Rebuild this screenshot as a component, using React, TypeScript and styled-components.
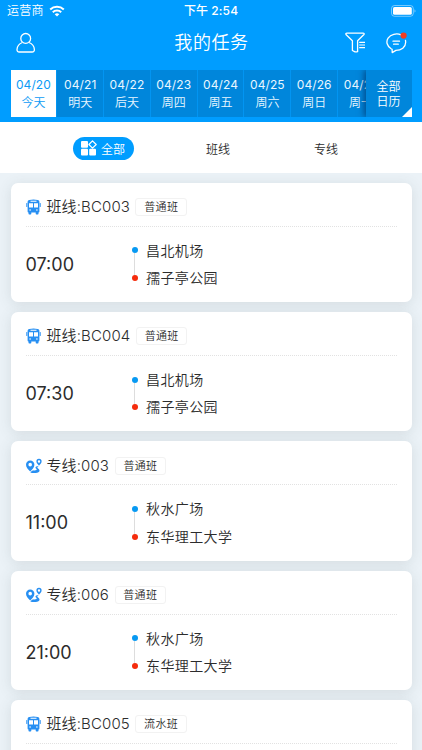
import React from "react";
import styled, { createGlobalStyle } from "styled-components";

const GlobalStyle = createGlobalStyle`
  * { box-sizing: border-box; }
  body {
    margin: 0;
    overflow: hidden;
    background: #e9eff3;
    font-family: Inter, "Noto Sans CJK SC", sans-serif;
    font-weight: 350;
    color: #2c2c2c;
  }
`;

const Screen = styled.div`
  width: 422px;
  height: 750px;
  overflow: hidden;
  background: #ebf2f7;
`;

const Header = styled.header`
  height: 121.5px;
  background: #009dff;
  color: #fff;
`;

const StatusBar = styled.div`
  display: grid;
  grid-template-columns: 1fr auto 1fr;
  align-items: center;
  height: 22px;
  padding: 0 5px 0 7px;
  font-size: 12px;
  line-height: 22px;
`;

const Carrier = styled.div`
  display: flex;
  align-items: center;
  gap: 5px;
  letter-spacing: 0.25px;
`;

const Clock = styled.div`
  margin-left: -2px;
  font-weight: 500;
  letter-spacing: 0.1px;
`;

const BatterySlot = styled.div`
  display: flex;
  justify-content: flex-end;
`;

const NavBar = styled.div`
  display: grid;
  grid-template-columns: 1fr auto 1fr;
  align-items: center;
  height: 42px;
  padding: 0 14px 0 15px;
`;

const Title = styled.h1`
  margin: 0;
  font-size: 18px;
  line-height: 42px;
  height: 42px;
  font-weight: inherit;
  letter-spacing: 0.6px;
`;

const Actions = styled.div`
  display: flex;
  justify-content: flex-end;
  gap: 20px;
`;

const DateStrip = styled.div`
  display: flex;
  height: 46.5px;
  margin: 6px 10.5px 0;
  background: #0086db;
  overflow: hidden;
`;

const DateList = styled.div`
  display: flex;
  width: 355px;
  overflow: hidden;
`;

const DateCell = styled.div<{ $active?: boolean }>`
  flex: 0 0 46.8px;
  padding-top: 6px;
  border-right: 1px solid #0295f2;
  background: ${(p) => (p.$active ? "#fff" : "#0086db")};
  color: ${(p) => (p.$active ? "#0c9bf5" : "#e8f6ff")};
  text-align: center;
  font-size: 12px;
  line-height: 17.5px;
  white-space: nowrap;
`;

const DateNumber = styled.div`
  font-weight: 400;
  letter-spacing: 0.1px;
`;

const CalendarButton = styled.div`
  position: relative;
  flex: 1;
  padding-top: 9px;
  background: #0086db;
  box-shadow: -2px 0 6px rgba(0, 40, 90, 0.6);
  text-align: center;
  font-size: 12px;
  line-height: 15px;

  &::after {
    content: "";
    position: absolute;
    right: 0;
    bottom: 0;
    border-left: 10px solid transparent;
    border-bottom: 10px solid #fff;
  }
`;

const Filters = styled.nav`
  display: grid;
  grid-template-columns: 122px 108px 108px;
  justify-content: center;
  align-items: center;
  height: 51px;
  padding-top: 2px;
  background: #fff;
  font-size: 12px;
`;

const Filter = styled.div<{ $active?: boolean }>`
  display: flex;
  justify-self: center;
  align-items: center;
  justify-content: center;
  gap: 4px;
  width: 61px;
  height: 23px;
  border-radius: 12px;
  background: ${(p) => (p.$active ? "#009dff" : "transparent")};
  color: ${(p) => (p.$active ? "#fff" : "#2c2c2c")};
`;

const TaskList = styled.main`
  display: flex;
  flex-direction: column;
  gap: 10px;
  padding: 10.2px 10.5px 0;
`;

const Card = styled.article`
  flex: none;
  height: 119.3px;
  padding: 0 15px;
  border-radius: 7px;
  background: #fff;
  box-shadow: 0 2px 14px rgba(60, 75, 80, 0.13);
`;

const CardHeader = styled.div`
  display: flex;
  align-items: center;
  height: 44px;
  padding-top: 6px;
  border-bottom: 1px dotted #e2e2e2;
`;

const IconSlot = styled.div`
  display: flex;
  width: 21px;
`;

const RouteName = styled.h2`
  margin: 0;
  font-size: 15px;
  line-height: 22px;
  font-weight: inherit;
  letter-spacing: 0.12px;
`;

const Tag = styled.span`
  margin-left: 5.5px;
  width: 51.5px;
  height: 18px;
  border: 1px solid #f2f2f2;
  border-radius: 3px;
  text-align: center;
  font-size: 11px;
  line-height: 16px;
  letter-spacing: 0.3px;
`;

const CardBody = styled.div`
  display: grid;
  grid-template-columns: 106px 1fr;
  align-items: center;
  height: 75px;
`;

const Departure = styled.div`
  font-size: 18px;
  font-weight: 380;
`;

const Stops = styled.div`
  display: grid;
  grid-template-columns: 6px 1fr;
  column-gap: 8.5px;
  align-items: center;
`;

const Track = styled.div`
  display: flex;
  flex-direction: column;
  align-items: center;
`;

const Dot = styled.i<{ $end?: boolean }>`
  width: 6px;
  height: 6px;
  border-radius: 50%;
  background: ${(p) => (p.$end ? "#f52b0c" : "#0799f2")};
`;

const Connector = styled.i`
  width: 1px;
  height: 21.5px;
  background: #ddd;
`;

const StopName = styled.div`
  font-size: 14px;
  line-height: 27.5px;
  letter-spacing: 0.4px;
`;

const WifiIcon = () => (
  <svg width="16" height="12" viewBox="0 0 16 12" fill="none" stroke="#fff" strokeWidth="2">
    <path d="M1.2 4.5a9.8 9.8 0 0 1 13.6 0M3.8 7.2a6 6 0 0 1 8.4 0" />
    <path d="M8 11.6 5.7 9.3a3.3 3.3 0 0 1 4.6 0Z" fill="#fff" stroke="none" />
  </svg>
);

const BatteryIcon = () => (
  <svg width="26" height="12" viewBox="0 0 26 12">
    <rect x=".5" y=".5" width="21.8" height="10.8" rx="3" fill="none" stroke="#fff" strokeOpacity=".45" />
    <rect x="2" y="2" width="18.8" height="7.8" rx="1.6" fill="#fff" />
    <path d="M23.5 4.2c1.3.5 1.3 2.9 0 3.4Z" fill="#fff" fillOpacity=".5" />
  </svg>
);

const UserIcon = () => (
  <svg width="21" height="22" viewBox="0 0 21 22" fill="none" stroke="#fff" strokeWidth="1.3">
    <circle cx="10.7" cy="6.4" r="4.9" />
    <path d="M7.4 10.5C4.2 11.7 2.2 14.2 2 17.5c-.1 1.6.8 2.5 2.3 2.5h12.8c1.5 0 2.4-.9 2.3-2.5-.2-3.3-2.2-5.8-5.4-7" />
  </svg>
);

const FunnelIcon = () => (
  <svg width="21" height="21" viewBox="0 0 21 21" fill="none" stroke="#fff" strokeWidth="1.3" strokeLinejoin="round">
    <path d="M12.6 19.9V8.7L18.7 2.8c.8-.9.4-1.7-.7-1.7H2C.9 1.1.5 1.9 1.2 2.8l6.2 5.9v9.8l2.7 1.4h2.5" />
    <path d="M14.2 10.3H20M14.2 13H20M14.2 15.7H20" strokeWidth="1.2" />
  </svg>
);

const MessageIcon = () => (
  <svg width="22" height="22" viewBox="0 0 22 22" fill="none" stroke="#fff" strokeWidth="1.3" strokeLinecap="round" strokeLinejoin="round">
    <path d="M15 2.8A10 8.5 0 0 0 2.1 6.2C-.2 9.6.9 14 5.1 16.7l1 .6.1 3.3 3.7-2.2c5.500 0 9.700-3.300 9.800-8.200l-.2-1.800" />
    <path d="M7 9.2h6.500M7.600 12.200h4.700" />
    <circle cx="17.600" cy="3.600" r="3.100" fill="#ef3c22" stroke="none" />
  </svg>
);

const GridIcon = () => (
  <svg width="16" height="16" viewBox="0 0 16 16" fill="#fff">
    <rect x="0" y="1" width="7" height="6.7" rx="1" />
    <rect x="0" y="8.8" width="7" height="6.7" rx="1" />
    <rect x="8.2" y="8.8" width="6.8" height="6.7" rx="1" />
    <path d="m11.5.8 3.7 3.7-3.7 3.7L7.9 4.5Z" fill="none" stroke="#fff" strokeWidth="1.2" strokeLinejoin="round" />
  </svg>
);

const BusIcon = () => (
  <svg width="15" height="16" viewBox="0 0 15 16" fill="#278ff2">
    <path d="M3.3 1Q7.5 0 11.7 1q1.700.4 1.700 1.700v9.900q0 1-.9 1v1.200q0 .7-.7.700h-1.400q-.7 0-.7-.7v-1.200H5.300v1.200q0 .7-.7.700H3.200q-.7 0-.7-.7v-1.200q-.9 0-.9-1V2.700Q1.600 1.400 3.300 1Z" />
    <rect x=".3" y="4" width="1" height="4" rx=".5" />
    <rect x="13.700" y="4" width="1" height="4" rx=".5" />
    <path d="M4.500 1.800h6v.9h-6ZM3 4.200H7V8.500H3Zm5 0h4v4.300H8Z" fill="#fff" />
    <circle cx="4.100" cy="11" r=".8" fill="#fff" />
    <circle cx="10.900" cy="11" r=".8" fill="#fff" />
  </svg>
);

const RouteIcon = () => (
  <svg width="16" height="16" viewBox="0 0 16 15.5" fill="#278ff2">
    <path fillRule="evenodd" d="M4.200 2.300A4.100 4.100 0 0 0 0 6.400C0 9 2.400 11.200 4.200 13.200 6 11.200 8.400 9 8.400 6.400A4.100 4.100 0 0 0 4.200 2.300Zm0 2.300a1.800 1.800 0 1 1 0 3.600 1.800 1.800 0 0 1 0-3.600Z" />
    <path fillRule="evenodd" d="M13 .6a2.600 2.600 0 0 0-2.600 2.700C10.400 5 12 6.300 13 7.500c1-1.200 2.600-2.500 2.600-4.200A2.600 2.600 0 0 0 13 .6Zm0 1.500a1.200 1.200 0 1 1 0 2.400 1.200 1.200 0 0 1 0-2.400Z" />
    <path d="M12.200 7.800c-1.900.2-3.400 1-2.500 2.300.6.700 1.500 1 .7 1.600-1 .7-2.900.4-4.400.7L4.300 14.200c2.400 1.100 7.600.9 9-1 1-1.400-.8-2.600-1.700-3.500-.5-.6-.2-1.200 1.200-1.600Z" />
  </svg>
);

const dates = [
  ["04/20", "今天"],
  ["04/21", "明天"],
  ["04/22", "后天"],
  ["04/23", "周四"],
  ["04/24", "周五"],
  ["04/25", "周六"],
  ["04/26", "周日"],
  ["04/27", "周一"],
];

interface Task {
  kind: "bus" | "route";
  name: string;
  tag: string;
  time: string;
  from: string;
  to: string;
}

const tasks: Task[] = [
  { kind: "bus", name: "班线:BC003", tag: "普通班", time: "07:00", from: "昌北机场", to: "孺子亭公园" },
  { kind: "bus", name: "班线:BC004", tag: "普通班", time: "07:30", from: "昌北机场", to: "孺子亭公园" },
  { kind: "route", name: "专线:003", tag: "普通班", time: "11:00", from: "秋水广场", to: "东华理工大学" },
  { kind: "route", name: "专线:006", tag: "普通班", time: "21:00", from: "秋水广场", to: "东华理工大学" },
  { kind: "bus", name: "班线:BC005", tag: "流水班", time: "", from: "", to: "" },
];

const TaskCard = ({ task }: { task: Task }) => (
  <Card>
    <CardHeader>
      <IconSlot>{task.kind === "bus" ? <BusIcon /> : <RouteIcon />}</IconSlot>
      <RouteName>{task.name}</RouteName>
      <Tag>{task.tag}</Tag>
    </CardHeader>
    {task.time && (
      <CardBody>
        <Departure>{task.time}</Departure>
        <Stops>
          <Track>
            <Dot />
            <Connector />
            <Dot $end />
          </Track>
          <div>
            <StopName>{task.from}</StopName>
            <StopName>{task.to}</StopName>
          </div>
        </Stops>
      </CardBody>
    )}
  </Card>
);

export default function App() {
  return (
    <Screen>
      <GlobalStyle />
      <Header>
        <StatusBar>
          <Carrier>
            运营商
            <WifiIcon />
          </Carrier>
          <Clock>下午 2:54</Clock>
          <BatterySlot>
            <BatteryIcon />
          </BatterySlot>
        </StatusBar>
        <NavBar>
          <UserIcon />
          <Title>我的任务</Title>
          <Actions>
            <FunnelIcon />
            <MessageIcon />
          </Actions>
        </NavBar>
        <DateStrip>
          <DateList>
            {dates.map(([date, day], i) => (
              <DateCell key={date} $active={i === 0}>
                <DateNumber>{date}</DateNumber>
                {day}
              </DateCell>
            ))}
          </DateList>
          <CalendarButton>
            全部
            <br />
            日历
          </CalendarButton>
        </DateStrip>
      </Header>
      <Filters>
        <Filter $active>
          <GridIcon />
          全部
        </Filter>
        <Filter>班线</Filter>
        <Filter>专线</Filter>
      </Filters>
      <TaskList>
        {tasks.map((task) => (
          <TaskCard key={task.name} task={task} />
        ))}
      </TaskList>
    </Screen>
  );
}
